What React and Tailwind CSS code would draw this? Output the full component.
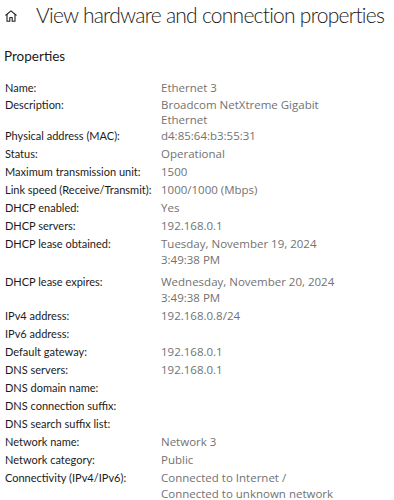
import React from "react";

const rows = [
  ["Name:", ["Ethernet 3"]],
  ["Description:", ["Broadcom NetXtreme Gigabit", "Ethernet"], "leading-[15px]"],
  ["Physical address (MAC):", ["d4:85:64:b3:55:31"]],
  ["Status:", ["Operational"]],
  ["Maximum transmission unit:", ["1500"]],
  ["Link speed (Receive/Transmit):", ["1000/1000 (Mbps)"]],
  ["DHCP enabled:", ["Yes"]],
  ["DHCP servers:", ["192.168.0.1"]],
  ["DHCP lease obtained:", ["Tuesday, November 19, 2024", "3:49:38 PM"], "py-[1px] leading-[16px] mb-[4px]"],
  ["DHCP lease expires:", ["Wednesday, November 20, 2024", "3:49:38 PM"]],
  ["IPv4 address:", ["192.168.0.8/24"]],
  ["IPv6 address:", []],
  ["Default gateway:", ["192.168.0.1"]],
  ["DNS servers:", ["192.168.0.1"]],
  ["DNS domain name:", []],
  ["DNS connection suffix:", []],
  ["DNS search suffix list:", []],
  ["Network name:", ["Network 3"]],
  ["Network category:", ["Public"]],
  ["Connectivity (IPv4/IPv6):", ["Connected to Internet /", "Connected to unknown network"]],
];

function HomeIcon() {
  return (
    <svg width="14" height="14" viewBox="0 0 14 14" fill="none" stroke="#222" strokeWidth="1.1" strokeLinejoin="round">
      <path d="M1.5 6.5 L7 1.8 L12.5 6.5" />
      <path d="M3 5.3 V12.3 H5.8 V8.5 H8.2 V12.3 H11 V5.3" />
    </svg>
  );
}

export default function App() {
  return (
    <div className="w-[394px] h-[500px] overflow-hidden bg-white text-[#1b1b1b]" style={{ fontFamily: 'Lato, "Noto Sans", sans-serif' }}>
      <div className="flex items-center h-[30px] pl-[4px]">
        <div className="w-[14px] flex items-center justify-center mt-[1px]">
          <HomeIcon />
        </div>
        <div className="ml-[18px] text-[21px] font-light leading-[30px] tracking-[-0.75px] whitespace-nowrap">
          View hardware and connection properties
        </div>
      </div>
      <div className="pl-[4px] mt-[16px] text-[13.5px] leading-[20px]">Properties</div>
      <div className="mt-[13px] flex flex-col pl-[5px]">
        {rows.map(([label, vals, cls]) => (
          <div key={label} className={"flex items-start " + (cls || "py-[1px] leading-[16px]")}>
            <div className="w-[156px] shrink-0 whitespace-nowrap text-[11px]">{label}</div>
            <div className="text-[#727272] text-[11.5px]" style={{ fontFamily: '"Open Sans", "Noto Sans", sans-serif' }}>
              {vals.length === 0 ? <div>&nbsp;</div> : vals.map((v) => <div key={v} className="whitespace-nowrap">{v}</div>)}
            </div>
          </div>
        ))}
      </div>
    </div>
  );
}
